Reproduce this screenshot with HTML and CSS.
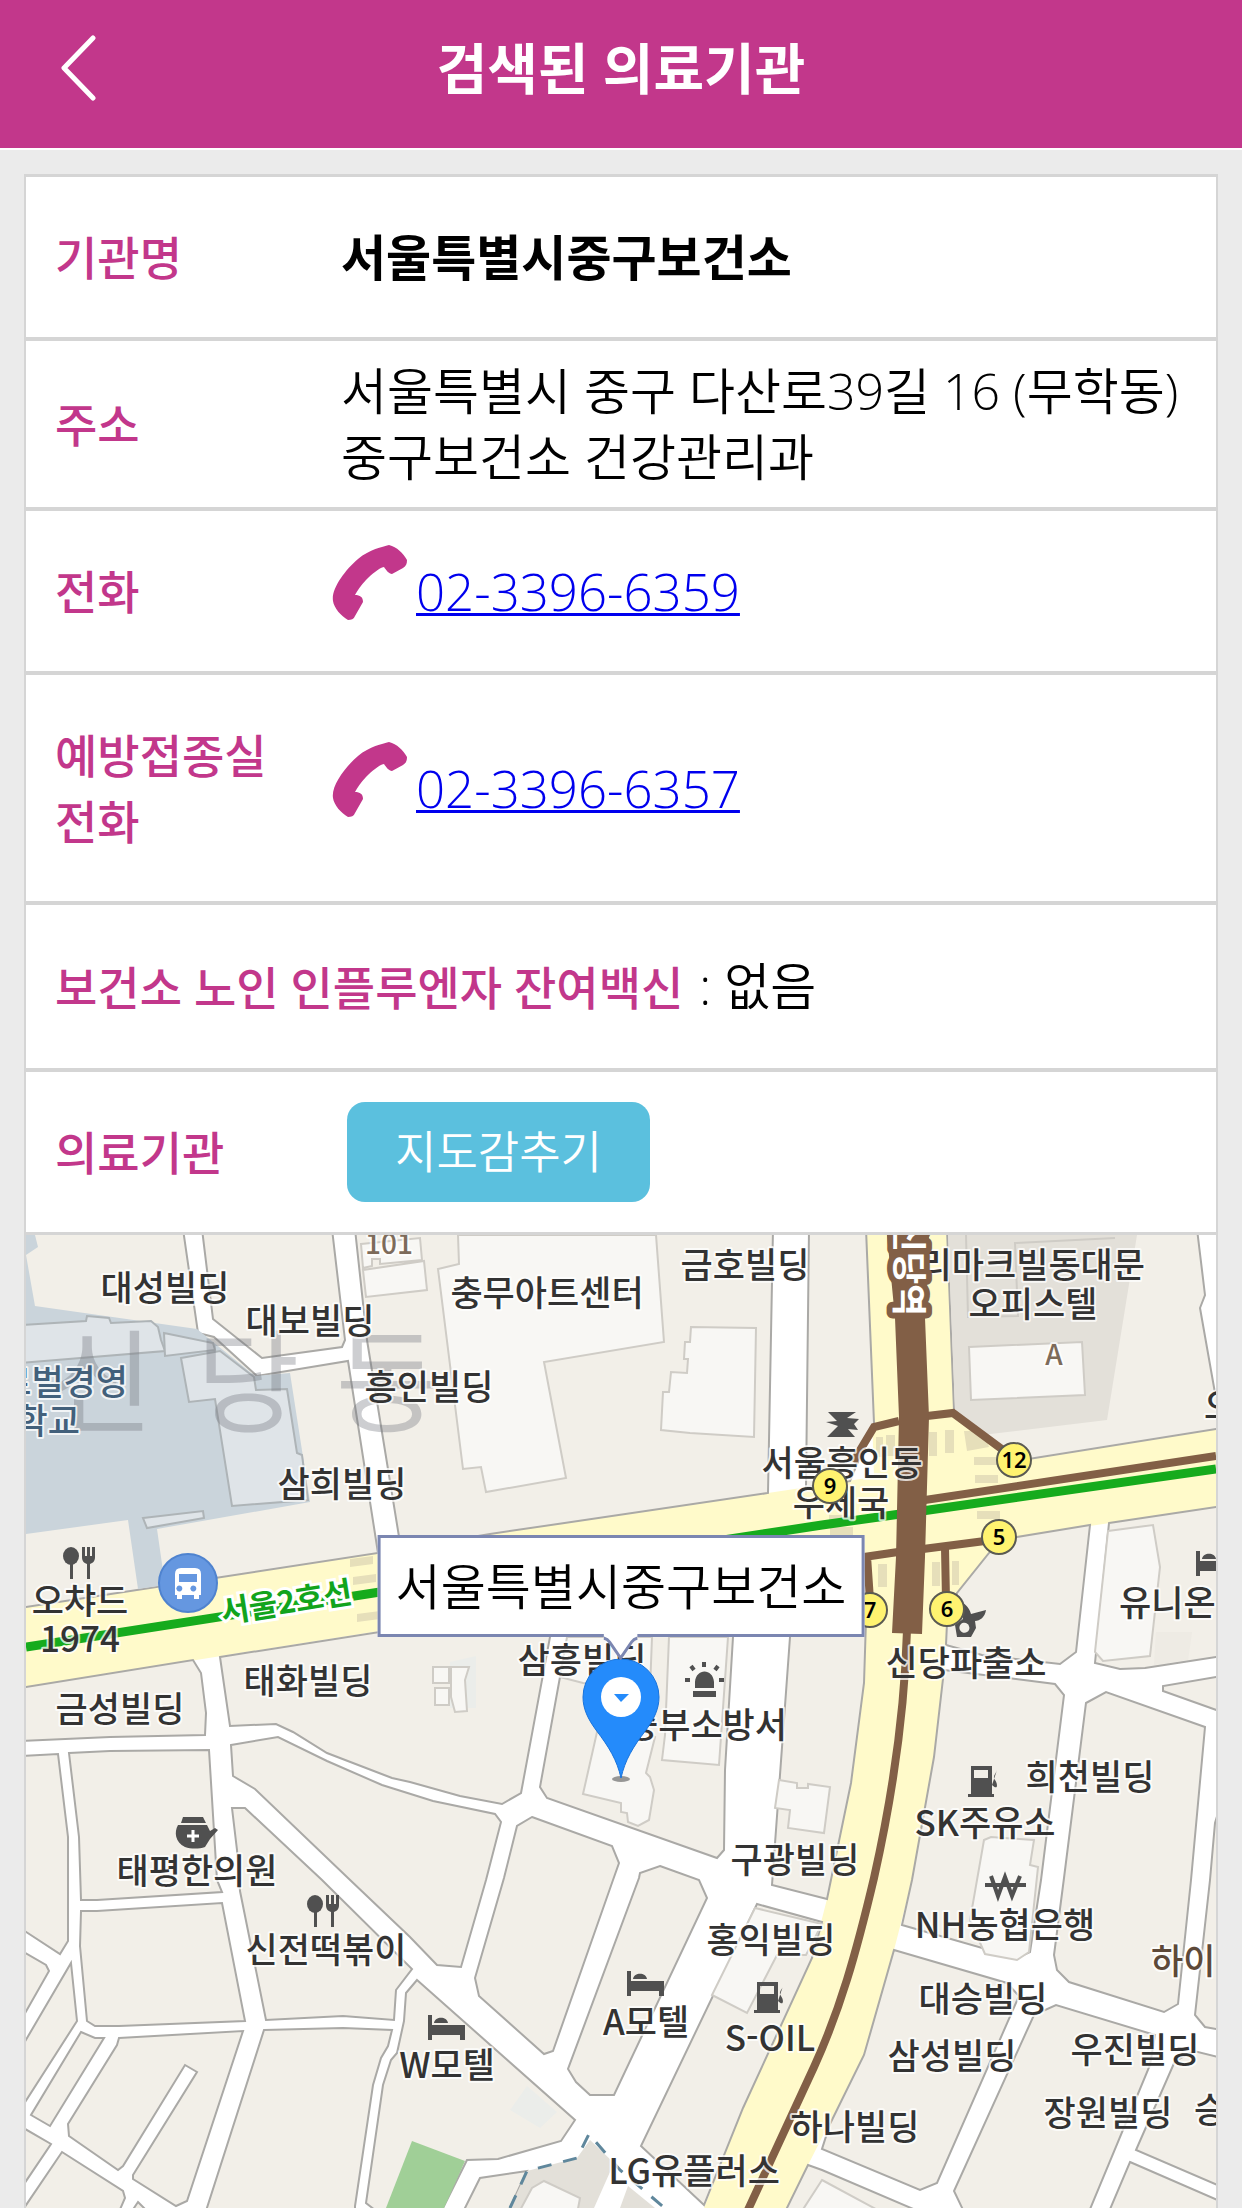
FILE: index.html
```html
<!DOCTYPE html>
<html lang="ko">
<head>
<meta charset="utf-8">
<meta name="viewport" content="width=device-width, initial-scale=1">
<title>검색된 의료기관</title>
<link rel="stylesheet" href="styles.css">
</head>
<body>
<header class="topbar">
  <button class="back" type="button" aria-label="뒤로">
    <svg viewBox="0 0 36 66" width="36" height="66" aria-hidden="true"><path d="M33 3 4 33l29 30"/></svg>
  </button>
  <h1>검색된 의료기관</h1>
</header>

<main class="panel">
  <table class="info">
    <tr class="row-first"><th scope="row">기관명</th><td class="strong">서울특별시중구보건소</td></tr>
    <tr class="row-address"><th scope="row">주소</th><td>서울특별시 중구 다산로39길 16 (무학동) 중구보건소 건강관리과</td></tr>
    <tr><th scope="row">전화</th><td class="tel"><div class="phone">
      <svg viewBox="0 0 75 75" width="75" height="75" aria-hidden="true"><path class="handset" d="M1 56C-1 44 13 25 26 14 38 4 50 2 57 0c8 2 14 8 18 15 0 4-1 6-4 8l-11 6c-3 0-6-4-8-7-5 1-12 7-18 13-5 5-9 11-11 15 5 0 8 2 8 7l-8 14c-1 3-4 4-7 4C9 71 2 63 1 56z"/></svg>
      <a href="tel:02-3396-6359">02-3396-6359</a></div></td></tr>
    <tr class="row-clinic"><th scope="row">예방접종실<br>전화</th><td class="tel"><div class="phone">
      <svg viewBox="0 0 75 75" width="75" height="75" aria-hidden="true"><path class="handset" d="M1 56C-1 44 13 25 26 14 38 4 50 2 57 0c8 2 14 8 18 15 0 4-1 6-4 8l-11 6c-3 0-6-4-8-7-5 1-12 7-18 13-5 5-9 11-11 15 5 0 8 2 8 7l-8 14c-1 3-4 4-7 4C9 71 2 63 1 56z"/></svg>
      <a href="tel:02-3396-6357">02-3396-6357</a></div></td></tr>
    <tr class="row-vaccine"><th scope="row" colspan="2">보건소 노인 인플루엔자 잔여백신 <span class="stock">: 없음</span></th></tr>
    <tr><th scope="row">의료기관</th><td><button class="toggle" type="button">지도감추기</button></td></tr>
  </table>

  <section class="map" aria-label="지도">
    <svg class="canvas" viewBox="26 1235 1190 973" preserveAspectRatio="xMidYMid slice">
      <defs>
        <g id="bed"><path d="M0 0h4v10h33v15h-5v-5H4v5H0zM6 8c1-7 13-7 14 0z"/></g>
        <g id="pump"><path fill-rule="evenodd" d="M3 0h21v28h2v3H0v-3h3zm3 4v8h14V4z"/><path class="hose" d="M24 19c6 6 6-1 3-5-3-4 1-6 2-10"/></g>
        <g id="fork"><ellipse cx="7" cy="9" rx="8" ry="9"/><path d="M6 15h3v17H6zM18 0h3v9h2V0h3v9h2V0h3v10c0 4-2 6-5 7v15h-3V17c-3-1-5-3-5-7z"/></g>
      </defs>

      <rect class="street" x="26" y="1235" width="1190" height="973"/>

      <!-- main avenues -->
      <path class="avenue" d="M26 1607 490 1534 768 1493 874 1477 866 1235H947L954 1410 1010 1462 1216 1429V1507L1017 1537 989 1553 947 1623 945 1673 934 1757 912 1880 894 1950 864 2055 808 2165 788 2208H704L743 2108 812 1958 827 1899 851 1783 864 1683 867 1558 380 1631 26 1687z"/>

      <!-- city blocks -->
      <g class="block">
        <path d="M20 1229H183L198 1333 214 1337 257 1376 348 1361 378 1553 20 1608z"/>
        <path d="M202 1229 213 1319 262 1358 342 1347 345 1340 332 1229z"/>
        <path d="M355 1229 367 1340 401 1549 490 1534 768 1493 773 1229z"/>
        <path d="M809 1229 806 1487 850 1481 874 1423 866 1229z"/>
        <path d="M947 1229 954 1410 995 1445 1010 1462 1222 1428V1398L1215 1393 1200 1308 1205 1295 1197 1229z"/>
        <path d="M20 1688 193 1660 201 1673 206 1713 205 1735 110 1737 20 1741z"/>
        <path d="M220 1657 551 1605 550 1637 521 1793 502 1804 460 1796 410 1782 392 1778 327 1753 293 1732 276 1724 230 1726z"/>
        <path d="M20 1756 58 1754 68 1837 68 1941 60 1954 20 1928z"/>
        <path d="M69 1753 110 1751 209 1750 217 1880 222 1892 97 1900 81 1900 79 1837z"/>
        <path d="M81 1911H97L222 1903 245 2021 119 2026H95L87 2021 80 1946z"/>
        <path d="M71 1963 77 2021 20 2110V2050z"/>
        <path d="M20 1950 46 1965 49 1971 20 2022z"/>
        <path d="M81 2032 95 2038H104L50 2126 31 2115z"/>
        <path d="M119 2038 243 2031 187 2201 176 2206 133 2179V2175L197 2072 185 2065 123 2166 118 2170 69 2136 68 2124 117 2045z"/>
        <path d="M20 2126 51 2144 20 2190z"/>
        <path d="M62 2152 123 2191 125 2198 118 2214H20z"/>
        <path d="M138 2202 150 2214H130z"/>
        <path d="M231 1745 278 1737 327 1761 382 1785 433 1801 495 1814 501 1822 486 1880 461 1967 437 1965 410 1937 348 1878 255 1789 233 1776z"/>
        <path d="M232 1808H245L322 1880 412 1969 396 1990 394 2020 343 2016 266 2020 240 1891 237 1850z"/>
        <path d="M264 2030 343 2028 392 2030 388 2046 381 2058 373 2085 355 2206V2214H205z"/>
        <path d="M417 1980 575 2120 561 2141 498 2159 467 2160 440 2214H380L366 2203 383 2085 391 2060 397 2053 404 2021 406 1993z"/>
        <path d="M462 2214 480 2178 527 2171 507 2214z"/>
        <path d="M532 1817 612 1846 619 1863 613 1880 553 2051 544 2054 479 1996 475 1978 504 1878 517 1826z"/>
        <path d="M576 1601 560 1677 540 1787 547 1798 717 1858 724 1850 725 1770 733 1637V1577z"/>
        <path d="M660 1866 699 1880 707 1898 614 2095H590L576 2082 568 2069 639 1878 640 1873z"/>
        <path d="M793 1570 790 1637 772 1885 827 1899 851 1783 864 1683 868 1558z"/>
        <path d="M757 1904 822 1922 812 1958 743 2108 704 2205 641 2146z"/>
        <path d="M989 1553 1017 1537 1090 1525 1076 1652 1060 1664 982 1655 946 1645 947 1623 957 1593z"/>
        <path d="M944 1670 1055 1684 1064 1695 1041 1880 1030 1952 1017 1958 902 1925 912 1880 934 1757z"/>
        <path d="M1109 1523 1222 1506V1656L1145 1668 1120 1669 1095 1663z"/>
        <path d="M1222 1676 1163 1686V1691L1222 1712z"/>
        <path d="M1086 1703 1106 1692 1205 1727 1191 1880 1178 2004 1164 2012 1069 1982 1057 1970 1054 1955 1064 1878z"/>
        <path d="M1222 1800 1215 1823 1210 1880 1195 2015 1205 2027 1222 2030z"/>
        <path d="M894 1950 1007 1983 1019 1996 937 2183 920 2190 822 2149 830 2124 864 2055z"/>
        <path d="M1034 2015 1056 2005 1155 2035 1150 2065 1088 2214H965L954 2191z"/>
        <path d="M1175 2061 1194 2051 1222 2058V2187L1136 2150z"/>
        <path d="M1130 2162 1222 2202V2214H1108z"/>
        <path d="M808 2165 822 2170 925 2214H784z"/>
      </g>

      <!-- campus, park and shaded lots -->
      <path class="campus" d="M26 1235H35L38 1247 26 1255zM26 1255 35 1306 197 1329 255 1376 290 1373 310 1502 157 1529 165 1585 138 1589 128 1520 26 1534z"/>
      <path class="lot" d="M948 1235H1137L1107 1420 982 1435 955 1409z"/>
      <path class="lot" d="M590 2140 614 2163 594 2208H510L527 2171 577 2158zM628 2186 655 2208H620z"/>
      <path class="lot" d="M1156 1632h36l-4 28-34 5z" opacity=".3"/>
      <path class="park" d="M412 2141 465 2161 444 2208H386z"/>
      <path class="pale" d="M527 2086 557 2112 540 2128 510 2110zM450 1662l26-6v52h-26z"/>
      <path class="dash" d="M510 2208 527 2171 577 2158 589 2134 620 2170 667 2210"/>

      <!-- buildings -->
      <g class="hall">
        <path d="M20 1325 86 1321 87 1316 109 1318 111 1323 151 1321 158 1327 161 1340 165 1351 20 1363z"/>
        <path d="M164 1333 213 1343 215 1350 165 1356z"/>
        <path d="M181 1358 220 1351 254 1377 256 1390 287 1389 297 1453 302 1455 308 1500 232 1506 215 1399 189 1402z"/>
        <path d="M143 1518 203 1511 204 1518 147 1528z"/>
      </g>
      <g class="building">
        <path d="M458 1235 459 1264 438 1269 463 1469 481 1467 486 1492 566 1478 544 1362 664 1342 656 1235z"/>
        <path d="M691 1327 756 1328 754 1437 690 1433 661 1430 663 1392H669L671 1372 687 1373 688 1359H684L685 1342H690z"/>
        <path d="M361 1244 420 1238 422 1260 380 1264V1259H372V1266L363 1268zM363 1270 424 1261 427 1290 366 1297z"/>
        <path d="M433 1667h16v16h-16zM435 1688h14v17h-14zM451 1667h18l-4 13 2 31-12 1-4-15z"/>
        <path d="M567 1637H652L650 1690 583 1683 560 1677z"/>
        <path d="M602 1710 583 1794 621 1803V1812L627 1813 628 1822 638 1826 649 1820 654 1790 650 1777 646 1773 655 1737z"/>
        <path d="M669 1637 665 1735 662 1760 719 1765 728 1637z"/>
        <path d="M779 1780 797 1783V1788H808V1784L830 1787 824 1833 788 1828 790 1810 775 1808z"/>
        <path d="M1108 1531 1153 1525 1160 1567 1150 1656 1103 1661 1095 1652z"/>
        <path d="M984 1840 991 1837 1034 1840 1030 1865 1038 1867 1029 1952 1017 1960 985 1954 970 1920z"/>
        <path d="M755 1908 822 1924 806 1955H777L747 2013 712 1995z"/>
        <path d="M544 2181 580 2198 577 2214H518L532 2188z"/>
        <path d="M822 2180 885 2214H800z"/>
        <path d="M969 1347 1082 1342 1085 1395 971 1400z"/>
        <path class="faint" d="M966 1235 968 1317 1018 1316 1015 1243 1115 1238"/>
      </g>

      <!-- zebra crossings -->
      <path class="zebra" d="M929 1432h8v24h-8zM945 1430h9v23h-9zM964 1431h20l5 16-22 4zM876 1437h7v20h-7zM886 1435h9v21h-9zM974 1457h23v8h-23zM975 1475h23v8h-23zM977 1511h23v8h-23zM829 1515h23v8h-23zM830 1527h23v8h-23zM350 1559l23-3v8l-23 3zM353 1577l23-3v8l-23 3zM357 1614l23-3v8l-23 3zM878 1564h9v23h-9zM932 1562h8v24h-8zM952 1561h7v24h-7z"/>

      <!-- subway lines -->
      <path class="line2" d="M26 1647 380 1592 822 1525 929 1510 1216 1469"/>
      <g class="line6">
        <path d="M925 1500 1216 1456M853 1462 874 1427 899 1421M927 1416 953 1413 1003 1450M923 1549 985 1541M898 1552 864 1557M945 1548 946 1600M867 1556 870 1600"/>
        <path d="M907 1630C905 1700 896 1780 874 1878 856 1954 840 2010 814 2067L747 2212"/>
        <path class="platform" d="M887 1235H929L925 1318 929 1417 925 1557 922 1634 892 1633 896 1557 899 1417 895 1318z"/>
      </g>

      <g class="district"><text x="102" y="1424">신</text><text x="248" y="1424">당</text><text x="387" y="1424">동</text></g>

      <!-- place names -->
      <g class="names">
        <text x="165" y="1301">대성빌딩</text><text x="310" y="1334">대보빌딩</text><text x="429" y="1400">흥인빌딩</text><text x="342" y="1497">삼희빌딩</text>
        <text x="547" y="1306">충무아트센터</text><text x="745" y="1278">금호빌딩</text><text x="1033" y="1317">오피스텔</text>
        <text class="to-left" x="1145" y="1278">리마크빌동대문</text>
        <text x="842" y="1476">서울흥인동</text><text x="841" y="1516">우체국</text><text class="to-right" x="1204" y="1419">오</text>
        <text x="80" y="1614">오챠드</text><text x="80" y="1652">1974</text><text x="120" y="1722">금성빌딩</text><text x="308" y="1694">태화빌딩</text>
        <text class="to-right" x="1119" y="1616">유니온</text><text x="966" y="1676">신당파출소</text><text x="582" y="1673">삼흥빌딩</text><text class="to-left" x="787" y="1738">중부소방서</text>
        <text x="1090" y="1790">희천빌딩</text><text x="985" y="1836">SK주유소</text><text x="795" y="1873">구광빌딩</text><text x="197" y="1884">태평한의원</text>
        <text x="326" y="1963">신전떡볶이</text><text x="771" y="1953">홍익빌딩</text><text x="1005" y="1938">NH농협은행</text><text x="983" y="2012">대승빌딩</text>
        <text x="952" y="2069">삼성빌딩</text><text x="1135" y="2063">우진빌딩</text><text x="1108" y="2126">장원빌딩</text><text class="to-right" x="1194" y="2123">승</text>
        <text x="855" y="2140">하나빌딩</text><text x="694" y="2184">LG유플러스</text><text x="770" y="2051">S-OIL</text><text x="646" y="2035">A모텔</text><text x="447" y="2078">W모텔</text>
        <text class="school to-left" x="128" y="1395">로벌경영</text><text class="school to-left" x="80" y="1434">학교</text>
        <text class="block-no" x="389" y="1254">101</text><text class="block-no" x="1054" y="1365">A</text><text class="hi to-right" x="1151" y="1974">하이</text>
      </g>
      <text class="line2-name" transform="translate(288 1613) rotate(-9)">서울2호선</text>
      <text class="station" transform="translate(896 1268) rotate(90)">신당역</text>

      <!-- place icons -->
      <g class="icons">
        <use href="#bed" x="627" y="1971"/><use href="#bed" x="428" y="2015"/><use href="#bed" x="1196" y="1551"/>
        <use href="#pump" x="968" y="1766"/><use href="#pump" x="754" y="1982"/>
        <use href="#fork" x="308" y="1895"/><use href="#fork" x="64" y="1547"/>
        <path d="M183 1817h20l3 6h-25zM178 1825h29l3 6 5-3 3 2-8 9-5 8c-6 2-14 2-20 0-10-5-11-15-7-22z"/>
        <path class="cross" d="M187 1836h12M193 1830v12"/>
        <path d="M695 1688v-6c1-14 18-14 19 0v6zM693 1691h23v6h-23z"/>
        <path class="rays" d="M685 1680h5M719 1680h5M704 1662v5M691 1666l3 4M718 1666l-3 4"/>
        <path d="M828 1412h28l-9 6 12 1-5 5 4 6-10-1 7 8h-28l11-11-12-4 11-1z"/>
        <path fill-rule="evenodd" d="M963 1603c6 4 7 8 8 11l15-4c-1 7-6 11-11 11l1 7-5 9h-14l-2-12 8-6zM966 1623a5 5 0 1 0 1 9 5 5 0 0 0-1-9z"/>
        <path class="won" d="M991 1876 998 1896 1005 1877 1012 1896 1020 1876M985 1885h41"/>
      </g>

      <!-- station exits -->
      <g class="exit">
        <circle cx="1014" cy="1460" r="17"/><text x="1014" y="1468">12</text>
        <circle cx="830" cy="1486" r="17"/><text x="830" y="1494">9</text>
        <circle cx="999" cy="1537" r="17"/><text x="999" y="1545">5</text>
        <circle cx="947" cy="1609" r="17"/><text x="947" y="1617">6</text>
        <circle cx="870" cy="1610" r="17"/><text x="870" y="1618">7</text>
      </g>

      <circle class="bus-disc" cx="188" cy="1583" r="29"/>
      <path class="bus" fill-rule="evenodd" d="M181 1568h14q6 0 6 6v21h-2v4h-5v-4h-12v4h-5v-4h-2v-21q0-6 6-6zm-2 6v8h18v-8zm2 12a3 3 0 1 0 0 5 3 3 0 0 0 0-5zm14 0a3 3 0 1 0 0 5 3 3 0 0 0 0-5z"/>

      <!-- location pin -->
      <ellipse class="pin-shadow" cx="621" cy="1779" rx="9" ry="3"/>
      <path class="pin" d="M621 1778C617 1760 609 1747 596 1730 588 1719 583 1709 583 1697a38 38 0 0 1 76 0c0 12-5 22-13 33-13 17-21 30-25 48z"/>
      <circle class="pin-eye" cx="621" cy="1697" r="20"/>
      <path class="pin-mark" d="M614 1694h15l-8 8z"/>
    </svg>
    <div class="callout">서울특별시중구보건소<svg class="tail" viewBox="0 0 34 26" width="34" height="26" aria-hidden="true"><path class="tail-fill" d="M0 0H34V4Q30 5 28 8L17 24 6 8Q4 5 0 4z"/><path class="tail-edge" d="M0 4Q4 5 6 8L17 24 28 8Q30 5 34 4"/></svg></div>
  </section>
</main>
</body>
</html>
```
FILE: styles.css
```css
* { box-sizing: border-box; }

body {
  margin: 0;
  background: #ebebeb;
  color: #000;
  font-family: "Open Sans", "Noto Sans CJK KR", sans-serif;
  font-size: 50px;
  font-weight: 350;
  line-height: 66px;
}

.topbar {
  display: grid;
  grid-template-columns: 156px 1fr 156px;
  align-items: center;
  height: 150px;
  padding-bottom: 12px;
  background: #c2378b;
  border-bottom: 2px solid #fff;
}

.topbar h1 {
  margin: 0;
  color: #fff;
  font-size: 55px;
  font-weight: 700;
  text-align: center;
}

.back {
  width: 156px;
  height: 130px;
  padding: 0;
  border: 0;
  background: none;
}

.back svg { display: block; margin: 0 auto; }
.back path { fill: none; stroke: #fff; stroke-width: 5; stroke-linecap: round; stroke-linejoin: round; }

.panel {
  margin: 24px 24px 0;
  border: 2px solid #d5d5d5;
  border-bottom: 0;
  background: #fff;
}

.info { width: 100%; border-spacing: 0; }
.info tr { height: 164px; }
.info .row-first { height: 161px; }
.info .row-address { height: 170px; }
.info .row-clinic { height: 230px; }
.info .row-vaccine { height: 167px; }
.info th, .info td { padding: 0; border-top: 4px solid #d5d5d5; vertical-align: middle; }
.info td { padding-right: 30px; }
.info .row-first th, .info .row-first td { border-top-width: 1px; }

.info th {
  width: 315px;
  padding-left: 29px;
  color: #c2378b;
  font-size: 46px;
  font-weight: 500;
  text-align: left;
}

.info .strong { font-size: 49px; font-weight: 700; }
.info .tel { font-size: 51px; }
.stock { margin-left: 4px; color: #000; font-size: 50px; font-weight: 350; }

.phone { display: flex; align-items: center; gap: 9px; margin-left: -9px; }
.phone svg { margin-bottom: 18px; }
.handset { fill: #c2378b; }
.phone a { color: #00e; text-decoration-thickness: 3px; }

.toggle {
  display: block;
  height: 100px;
  margin-left: 6px;
  padding: 0 48px;
  border: 0;
  border-radius: 18px;
  background: #5bc0de;
  color: #fff;
  font: inherit;
  font-size: 45px;
}

.map {
  position: relative;
  aspect-ratio: 1190 / 976;
  overflow: hidden;
  border-top: 3px solid #d5d5d5;
}

.canvas { display: block; width: 100%; height: 100%; }

.street { fill: #fff; }
.avenue { fill: #fffaca; }
.block path { fill: #f2efe8; stroke: #aaa9a6; stroke-width: 2; }
.campus { fill: #cad4db; }
.lot { fill: #e3e0d9; }
.park { fill: #a0cf97; }
.pale { fill: #ebedea; }
.dash { fill: none; stroke: #5f879c; stroke-width: 3; stroke-dasharray: 14 12; }
.hall path { fill: #dfe4e8; stroke: #aeb4b7; stroke-width: 2; }
.building path { fill: #f8f7f4; stroke: #cfccc6; stroke-width: 2; }
.building .faint { fill: none; }
.zebra { fill: #e6dfba; }
.line2 { fill: none; stroke: #16ab1d; stroke-width: 9; }
.line6 path { fill: none; stroke: #825f46; stroke-width: 8; }
.line6 .platform { fill: #825f46; stroke: none; }

.canvas text { font-family: "Noto Sans CJK KR", sans-serif; text-anchor: middle; }
.district text { fill: #70737a; fill-opacity: .35; font-size: 112px; font-weight: 400; }

.names text {
  fill: #333;
  stroke: #fff;
  stroke-opacity: .75;
  stroke-width: 4;
  stroke-linejoin: round;
  paint-order: stroke;
  font-size: 35px;
  font-weight: 500;
}

.names .to-left { text-anchor: end; }
.names .to-right { text-anchor: start; }
.names .school { fill: #42607b; }
.names .block-no { fill: #7d6b5a; font-size: 28px; }
.names .hi { fill: #5d4939; }

.canvas .line2-name { fill: #12a41d; stroke: #fff; stroke-width: 6; paint-order: stroke; font-size: 31px; font-weight: 700; }
.canvas .station { fill: #fff; stroke: #825f46; stroke-width: 12; stroke-linejoin: round; paint-order: stroke; font-size: 35px; font-weight: 700; }

.icons { fill: #505050; }
.icons .hose, .icons .rays, .icons .won { fill: none; stroke: #505050; stroke-width: 3; }
.icons .rays, .icons .won { stroke-width: 4; }
.icons .cross { stroke: #fff; stroke-width: 3; }

.exit circle { fill: #fff370; stroke: #5a5a52; stroke-width: 2; }
.exit text { fill: #000; font-family: "Noto Sans", sans-serif; font-size: 22px; font-weight: 600; }

.bus-disc { fill: #6597e0; stroke: #4f83cf; stroke-width: 2; }
.bus { fill: #fff; }

.pin { fill: #248bfb; stroke: #1873dc; stroke-width: 1; }
.pin-eye { fill: #fff; }
.pin-mark { fill: #248bfb; }
.pin-shadow { fill: #555; fill-opacity: .6; }

.callout {
  position: absolute;
  left: 50%;
  bottom: 58.7%;
  transform: translateX(-50%);
  padding: 15px 15px;
  border: 3px solid #7b86b1;
  background: #fff;
  white-space: nowrap;
  font-size: 49px;
}

.tail { position: absolute; top: 100%; left: 50%; margin-left: -17px; }
.tail-fill { fill: #fff; }
.tail-edge { fill: none; stroke: #7b86b1; stroke-width: 3; }
```
